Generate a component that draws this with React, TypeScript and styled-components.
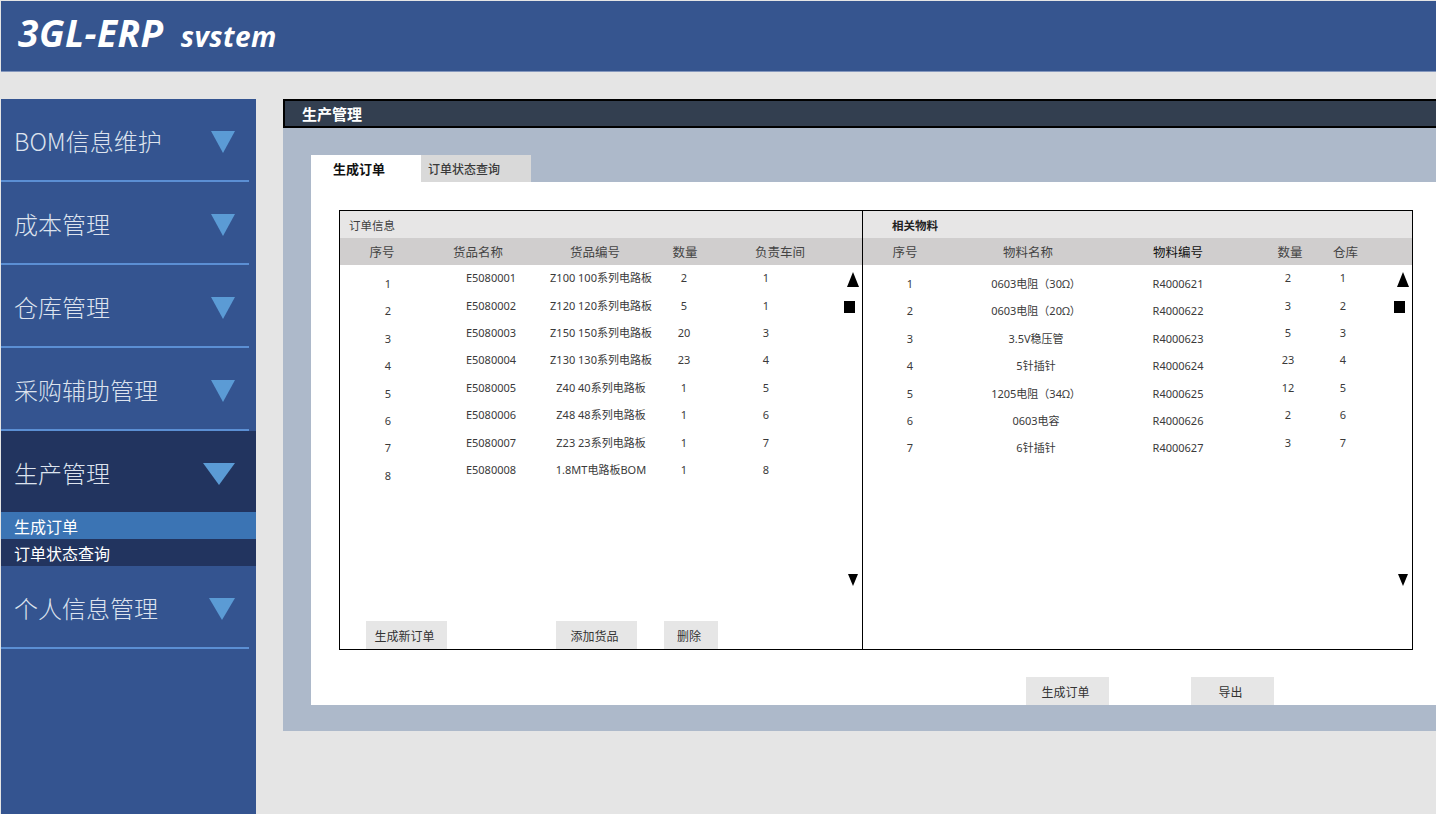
import React from "react";
import styled, { createGlobalStyle } from "styled-components";

const GlobalStyle = createGlobalStyle`
  html, body { margin: 0; padding: 0; background: #e5e5e5; }
  body { font-family: "Noto Sans", "Noto Sans CJK SC", sans-serif; overflow: hidden; }
  * { box-sizing: border-box; }
`;

const Page = styled.div`
  width: 1436px;
  height: 814px;
  padding: 1px 0 0 1px;
  display: flex;
  flex-direction: column;
  overflow: hidden;
`;

const Header = styled.header`
  height: 71px;
  flex-shrink: 0;
  background: #36558f;
  border-bottom: 1px solid #8497bd;
  display: flex;
  align-items: baseline;
  padding: 6px 0 0 17px;
  gap: 17px;
  color: #fff;
  font-family: "Open Sans", "Noto Sans", sans-serif;
  font-style: italic;
  font-weight: 700;
`;

const LogoMain = styled.span`
  font-size: 37px;
  letter-spacing: 0.5px;
`;

const LogoSub = styled.span`
  font-size: 28px;
  letter-spacing: 0.5px;
`;

const Content = styled.div`
  display: flex;
  margin-top: 27px;
  flex: 1;
  min-height: 0;
`;

const Sidebar = styled.nav`
  width: 255px;
  flex-shrink: 0;
  background: #345490;
  display: flex;
  flex-direction: column;
`;

const MenuItem = styled.div<{ $dark?: boolean; $divider?: boolean }>`
  height: ${(p) => (p.$divider ? 83 : 81)}px;
  flex-shrink: 0;
  display: flex;
  align-items: center;
  justify-content: space-between;
  padding: 1px 21px 0 13px;
  background: ${(p) => (p.$dark ? "#22345f" : "transparent")};
  border-bottom: ${(p) => (p.$divider ? "2px solid #5b8fd4" : "none")};
  margin-right: ${(p) => (p.$divider ? 7 : 0)}px;
  padding-right: ${(p) => (p.$divider ? 14 : 21)}px;
  color: #dde3ee;
  font-size: 24px;
  font-family: "Noto Sans CJK SC", sans-serif;
  font-weight: 300;
`;

const Arrow = styled.span<{ $w: number }>`
  width: 0;
  height: 0;
  margin-top: 4px;
  border-left: ${(p) => p.$w / 2}px solid transparent;
  border-right: ${(p) => p.$w / 2}px solid transparent;
  border-top: 22px solid #5b9bd5;
`;

const SubItem = styled.div<{ $active?: boolean }>`
  height: 27px;
  flex-shrink: 0;
  display: flex;
  align-items: center;
  padding-left: 13px;
  font-size: 16px;
  color: #fff;
  background: ${(p) => (p.$active ? "#3b74b4" : "#22345f")};
  font-family: "Noto Sans CJK SC", sans-serif;
`;

const Main = styled.section`
  flex: 1;
  margin-left: 27px;
  height: 632px;
  background: #adb9ca;
  display: flex;
  flex-direction: column;
`;

const TitleBar = styled.div`
  height: 29px;
  flex-shrink: 0;
  background: #333f50;
  border: 2px solid #000;
  border-right: none;
  color: #fff;
  font-size: 15px;
  font-weight: 700;
  display: flex;
  align-items: center;
  padding-left: 17px;
  font-family: "Noto Sans CJK SC", sans-serif;
`;

const PanelBody = styled.div`
  padding: 27px 0 27px 28px;
  display: flex;
  flex-direction: column;
  flex: 1;
`;

const Tabs = styled.div`
  display: flex;
  height: 27px;
`;

const Tab = styled.div<{ $active?: boolean }>`
  width: 110px;
  display: flex;
  align-items: center;
  padding-left: ${(p) => (p.$active ? 22 : 7)}px;
  background: ${(p) => (p.$active ? "#fff" : "#d9d9d9")};
  font-size: ${(p) => (p.$active ? 13 : 12)}px;
  font-weight: ${(p) => (p.$active ? 700 : 500)};
  color: ${(p) => (p.$active ? "#111" : "#3a3a3a")};
  font-family: "Noto Sans CJK SC", sans-serif;
`;

const Card = styled.div`
  background: #fff;
  flex: 1;
  padding: 28px 0 0 28px;
  display: flex;
  flex-direction: column;
`;

const Tables = styled.div`
  display: flex;
  height: 440px;
`;

const Box = styled.div<{ $w: number; $joined?: boolean }>`
  width: ${(p) => p.$w}px;
  border: 1px solid #000;
  border-left: ${(p) => (p.$joined ? "none" : "1px solid #000")};
  display: flex;
  flex-direction: column;
  color: #3a3a3a;
`;

const BoxTitle = styled.div<{ $pad: number; $strong?: boolean }>`
  height: 27px;
  background: #e7e6e6;
  display: flex;
  align-items: center;
  padding-left: ${(p) => p.$pad}px;
  font-size: 11.5px;
  font-weight: ${(p) => (p.$strong ? 700 : 400)};
  color: ${(p) => (p.$strong ? "#222" : "#404040")};
`;

const HeadRow = styled.div<{ $cols: string }>`
  height: 27px;
  background: #d0cece;
  display: grid;
  grid-template-columns: ${(p) => p.$cols};
  align-items: center;
  font-size: 12.5px;
  color: #444;
`;

const HeadCell = styled.div<{ $strong?: boolean }>`
  text-align: center;
  white-space: nowrap;
  color: ${(p) => (p.$strong ? "#111" : "#444")};
`;

const Body = styled.div`
  flex: 1;
  display: flex;
  min-height: 0;
`;

const Rows = styled.div`
  flex: 1;
`;

const Row = styled.div<{ $cols: string }>`
  height: 27.4px;
  display: grid;
  grid-template-columns: ${(p) => p.$cols};
`;

const Cell = styled.div<{ $drop?: boolean }>`
  display: flex;
  justify-content: center;
  align-items: ${(p) => (p.$drop ? "flex-start" : "center")};
  padding-top: ${(p) => (p.$drop ? 11 : 0)}px;
  padding-bottom: ${(p) => (p.$drop ? 0 : 2)}px;
  line-height: 15px;
  font-size: 11px;
  white-space: nowrap;
  color: #3a3a3a;
`;

const ScrollCol = styled.div`
  width: 20px;
  display: flex;
  flex-direction: column;
  align-items: flex-end;
  padding: 7px 3px 35px 0;
`;

const UpArrow = styled.span`
  width: 0;
  height: 0;
  border-left: 6.5px solid transparent;
  border-right: 6.5px solid transparent;
  border-bottom: 15px solid #000;
`;

const Square = styled.span`
  width: 11px;
  height: 12px;
  background: #000;
  margin: 14px 4px 0 0;
`;

const DownArrow = styled.span`
  width: 0;
  height: 0;
  margin: auto 1px 0 0;
  border-left: 5.5px solid transparent;
  border-right: 5.5px solid transparent;
  border-top: 12px solid #000;
`;

const Footer = styled.div<{ $pad?: number }>`
  height: 28px;
  flex-shrink: 0;
  display: flex;
  padding-left: ${(p) => p.$pad ?? 0}px;
`;

const Button = styled.div<{ $w: number; $gap?: number }>`
  width: ${(p) => p.$w}px;
  height: 28px;
  margin-left: ${(p) => p.$gap ?? 0}px;
  background: #e6e6e6;
  display: flex;
  align-items: center;
  justify-content: center;
  padding-right: 4px;
  font-size: 12px;
  color: #333;
  font-family: "Noto Sans CJK SC", sans-serif;
`;

const Actions = styled.div`
  display: flex;
  margin-top: 27px;
  padding-left: 687px;
`;

const leftHead = "84px 108px 126px 54px 136px";
const leftData = "96px 110px 110px 56px 108px";
const rightHead = "84px 162px 138px 86px 24px";
const rightData = "94px 158px 126px 94px 16px";

const leftRows = [
  ["1", "E5080001", "Z100 100系列电路板", "2", "1"],
  ["2", "E5080002", "Z120 120系列电路板", "5", "1"],
  ["3", "E5080003", "Z150 150系列电路板", "20", "3"],
  ["4", "E5080004", "Z130 130系列电路板", "23", "4"],
  ["5", "E5080005", "Z40 40系列电路板", "1", "5"],
  ["6", "E5080006", "Z48 48系列电路板", "1", "6"],
  ["7", "E5080007", "Z23 23系列电路板", "1", "7"],
  ["8", "E5080008", "1.8MT电路板BOM", "1", "8"],
];

const rightRows = [
  ["1", "0603电阻（30Ω）", "R4000621", "2", "1"],
  ["2", "0603电阻（20Ω）", "R4000622", "3", "2"],
  ["3", "3.5V稳压管", "R4000623", "5", "3"],
  ["4", "5针插针", "R4000624", "23", "4"],
  ["5", "1205电阻（34Ω）", "R4000625", "12", "5"],
  ["6", "0603电容", "R4000626", "2", "6"],
  ["7", "6针插针", "R4000627", "3", "7"],
];

const leftDrop = [true, false, false, false, false];
const rightDrop = [true, true, true, false, false];

const Scroll = () => (
  <ScrollCol>
    <UpArrow />
    <Square />
    <DownArrow />
  </ScrollCol>
);

export default function App() {
  return (
    <>
      <GlobalStyle />
      <Page>
        <Header>
          <LogoMain>3GL-ERP</LogoMain>
          <LogoSub>svstem</LogoSub>
        </Header>
        <Content>
          <Sidebar>
            <MenuItem $divider>
              BOM信息维护
              <Arrow $w={24} />
            </MenuItem>
            <MenuItem $divider>
              成本管理
              <Arrow $w={24} />
            </MenuItem>
            <MenuItem $divider>
              仓库管理
              <Arrow $w={24} />
            </MenuItem>
            <MenuItem $divider>
              采购辅助管理
              <Arrow $w={24} />
            </MenuItem>
            <MenuItem $dark>
              生产管理
              <Arrow $w={33} />
            </MenuItem>
            <SubItem $active>生成订单</SubItem>
            <SubItem>订单状态查询</SubItem>
            <MenuItem $divider>
              个人信息管理
              <Arrow $w={26} />
            </MenuItem>
          </Sidebar>
          <Main>
            <TitleBar>生产管理</TitleBar>
            <PanelBody>
              <Tabs>
                <Tab $active>生成订单</Tab>
                <Tab>订单状态查询</Tab>
              </Tabs>
              <Card>
                <Tables>
                  <Box $w={524}>
                    <BoxTitle $pad={9}>订单信息</BoxTitle>
                    <HeadRow $cols={leftHead}>
                      <HeadCell>序号</HeadCell>
                      <HeadCell>货品名称</HeadCell>
                      <HeadCell>货品编号</HeadCell>
                      <HeadCell>数量</HeadCell>
                      <HeadCell>负责车间</HeadCell>
                    </HeadRow>
                    <Body>
                      <Rows>
                        {leftRows.map((r) => (
                          <Row key={r[0]} $cols={leftData}>
                            {r.map((v, i) => (
                              <Cell key={i} $drop={leftDrop[i]}>
                                {v}
                              </Cell>
                            ))}
                          </Row>
                        ))}
                      </Rows>
                      <Scroll />
                    </Body>
                    <Footer $pad={26}>
                      <Button $w={81}>生成新订单</Button>
                      <Button $w={81} $gap={109}>
                        添加货品
                      </Button>
                      <Button $w={54} $gap={27}>
                        删除
                      </Button>
                    </Footer>
                  </Box>
                  <Box $w={550} $joined>
                    <BoxTitle $pad={29} $strong>
                      相关物料
                    </BoxTitle>
                    <HeadRow $cols={rightHead}>
                      <HeadCell>序号</HeadCell>
                      <HeadCell>物料名称</HeadCell>
                      <HeadCell $strong>物料编号</HeadCell>
                      <HeadCell>数量</HeadCell>
                      <HeadCell>仓库</HeadCell>
                    </HeadRow>
                    <Body>
                      <Rows>
                        {rightRows.map((r) => (
                          <Row key={r[0]} $cols={rightData}>
                            {r.map((v, i) => (
                              <Cell key={i} $drop={rightDrop[i]}>
                                {v}
                              </Cell>
                            ))}
                          </Row>
                        ))}
                      </Rows>
                      <Scroll />
                    </Body>
                    <Footer />
                  </Box>
                </Tables>
                <Actions>
                  <Button $w={83}>生成订单</Button>
                  <Button $w={83} $gap={82}>
                    导出
                  </Button>
                </Actions>
              </Card>
            </PanelBody>
          </Main>
        </Content>
      </Page>
    </>
  );
}
